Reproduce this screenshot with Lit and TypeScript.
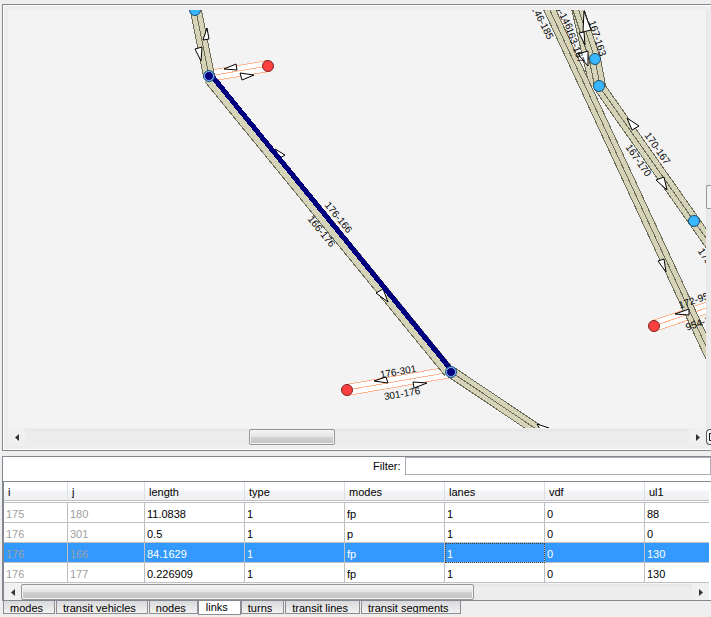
import { LitElement, html, svg, css } from "lit";
import { customElement, property, state } from "lit/decorators.js";
import { classMap } from "lit/directives/class-map.js";
import { styleMap } from "lit/directives/style-map.js";

type Pt = [number, number];

/* Map geometry, in map units (one unit is one pixel at the default zoom). */
const ROADS: { pts: Pt[]; plain?: boolean }[] = [
  { pts: [[193, 0], [196, 11], [209, 76]] },
  { pts: [[577, 8], [595, 86]] },
  { pts: [[578, 8], [595, 59], [600, 86]] },
  { pts: [[599, 86], [694, 221], [713, 248]] },
  { pts: [[548, 6], [711, 357]] },
  { pts: [[451, 372], [557, 443]] },
  { pts: [[209, 78], [449, 372]], plain: true },
];

const CONNECTORS: Pt[][] = [
  [[209, 76], [268, 66]],
  [[347, 390], [451, 372]],
  [[654, 326], [715, 305]],
];

const ARROWS = [
  "207,28 209,39 203,40",
  "195,49 202,47 201,61",
  "224,69 236,64 237,70",
  "240,73 254,75 242,80",
  "584,11 591,30 583,32",
  "579,33 584,32 585,45",
  "578,54 588,51 588,66",
  "627,118 639,126 632,130",
  "656,180 664,177 667,190",
  "658,261 664,259 666,272",
  "675,314 689,309 689,315",
  "275,149 285,155 280,158",
  "376,293 383,289 388,302",
  "374,381 386,377 388,383",
  "413,382 427,383 414,388",
  "537,424 549,428 541,431",
];

const LABELS: { text: string; x: number; y: number; a: number }[] = [
  { text: "176-166", x: 339, y: 217, a: 51 },
  { text: "166-176", x: 322, y: 231, a: 51 },
  { text: "176-301", x: 398, y: 371, a: -10 },
  { text: "301-176", x: 402, y: 393, a: -10 },
  { text: "167-170", x: 639, y: 160, a: 55 },
  { text: "170-167", x: 658, y: 148, a: 55 },
  { text: "167-163", x: 598, y: 38, a: 72 },
  { text: "163-167", x: 576, y: 45, a: 70 },
  { text: "185-146", x: 562, y: 12, a: 62 },
  { text: "146-185", x: 543, y: 22, a: 63 },
  { text: "172-954", x: 696, y: 299, a: -19 },
  { text: "954-172", x: 703, y: 321, a: -19 },
  { text: "175-167", x: 711, y: 264, a: 56 },
];

const NODES: Pt[] = [[195, 10], [209, 76], [451, 372], [595, 59], [599, 86], [694, 221]];
const ZONES: Pt[] = [[268, 66], [347, 390], [654, 326]];
const SELECTED: Pt[] = [[209, 76], [451, 372]];

const path = (pts: Pt[]) => pts.map((p) => p.join(",")).join(" ");

@customElement("network-map")
class NetworkMap extends LitElement {
  static styles = css`
    :host { display: block; min-width: 0; background: #f3f3f3; }
    svg { display: block; width: 100%; height: 418px; }
    polyline { fill: none; shape-rendering: crispEdges; }
    .casing { stroke: #6c6c58; stroke-width: 12; }
    .surface { stroke: #d5d3b8; stroke-width: 10; }
    .centre { stroke: #6c6c58; stroke-width: 1; }
    .c-casing { stroke: #ffb48e; stroke-width: 12; }
    .c-surface { stroke: #fff; stroke-width: 10; }
    .c-centre { stroke: #ffb48e; stroke-width: 1; }
    .arrow { fill: #fff; stroke: #000; stroke-width: 1; }
    .picked { stroke: #00007f; stroke-width: 5; }
    .node { fill: #38b6ff; stroke: #1c4f70; }
    .zone { fill: #ff4040; stroke: #7a2020; }
    .core { fill: #00007f; stroke: #8fa8e8; }
    text { font: 10px "Liberation Sans", Arial, sans-serif; text-anchor: middle; fill: #000; }
  `;

  render() {
    return html`
      <svg viewBox="8 10 698 418" preserveAspectRatio="xMinYMin slice" role="img" aria-label="Road network">
        ${CONNECTORS.map((p) => svg`
          <polyline class="c-casing" points=${path(p)}></polyline>
          <polyline class="c-surface" points=${path(p)}></polyline>
          <polyline class="c-centre" points=${path(p)}></polyline>`)}
        ${ROADS.map(({ pts, plain }) => svg`
          <polyline class="casing" points=${path(pts)}></polyline>
          <polyline class="surface" points=${path(pts)}></polyline>
          ${plain ? "" : svg`<polyline class="centre" points=${path(pts)}></polyline>`}`)}
        ${ARROWS.map((a) => svg`<polygon class="arrow" points=${a}></polygon>`)}
        <polyline class="picked" points="212,76 453,372"></polyline>
        ${LABELS.map((l) => svg`<text transform="translate(${l.x} ${l.y}) rotate(${l.a})" y="4">${l.text}</text>`)}
        ${NODES.map(([x, y]) => svg`<circle class="node" cx=${x} cy=${y} r="5.5"></circle>`)}
        ${ZONES.map(([x, y]) => svg`<circle class="zone" cx=${x} cy=${y} r="5.5"></circle>`)}
        ${SELECTED.map(([x, y]) => svg`<circle class="core" cx=${x} cy=${y} r="4.5"></circle>`)}
      </svg>`;
  }
}

@customElement("h-scrollbar")
class HScrollbar extends LitElement {
  @property({ type: Number }) start = 0;
  @property({ type: Number }) size = 50;

  static styles = css`
    :host { display: flex; height: 16px; background: linear-gradient(#e6e6e6, #ededed 30%, #ececec); }
    button { width: 17px; padding: 0; border: 0; background: #f0f0f0; display: flex; align-items: center; justify-content: center; }
    svg { display: block; fill: #333; }
    .track { flex: 1; min-width: 0; display: flex; }
    .thumb {
      box-sizing: border-box; height: 100%; border: 1px solid #979797; border-radius: 2px;
      background: linear-gradient(#f4f4f4, #e6e6e6 45%, #cfcfd1 55%, #c4c4c7); box-shadow: inset 0 0 0 1px #f2f2f2;
    }
  `;

  render() {
    return html`
      <button aria-label="Scroll left"><svg width="4" height="7" viewBox="0 0 4 7"><path d="M4 0v7L0 3.5z"/></svg></button>
      <div class="track">
        <div class="thumb" style=${styleMap({ marginLeft: `${this.start}%`, width: `${this.size}%` })}></div>
      </div>
      <button aria-label="Scroll right"><svg width="4" height="7" viewBox="0 0 4 7"><path d="M0 0v7l4-3.5z"/></svg></button>`;
  }
}

const COLUMNS = ["i", "j", "length", "type", "modes", "lanes", "vdf", "ul1"];
const ROWS = [
  ["175", "180", "11.0838", "1", "fp", "1", "0", "88"],
  ["176", "301", "0.5", "1", "p", "1", "0", "0"],
  ["176", "166", "84.1629", "1", "fp", "1", "0", "130"],
  ["176", "177", "0.226909", "1", "fp", "1", "0", "130"],
];
const TABS = ["modes", "transit vehicles", "nodes", "links", "turns", "transit lines", "transit segments"];

@customElement("app-root")
class AppRoot extends LitElement {
  @state() private tab = "links";
  @state() private row = 2;

  static styles = css`
    :host {
      display: flex; flex-direction: column; box-sizing: border-box; min-height: 100vh;
      padding: 4px 0 0 2px; gap: 5px; background: #eee; overflow: hidden;
      font: 11px/14px "Liberation Sans", Arial, sans-serif; color: #000;
    }
    .view { border: 1px solid #828790; border-right: 0; box-shadow: inset 1px 1px #fff, inset 0 -1px #fff; padding: 5px 0 5px 5px; }
    .view-grid { display: grid; grid-template-columns: minmax(0, 1fr) 5px; row-gap: 1px; }
    .v-track { background: linear-gradient(90deg, #e6e6e6, #ededed); }
    .v-thumb { box-sizing: border-box; margin-top: 175px; height: 24px; border: 1px solid #979797; border-right: 0; border-radius: 2px 0 0 2px; background: #f2f2f2; }
    .corner { padding: 0; border: 1px solid #555; border-right: 0; border-radius: 4px 0 0 4px; background: #f4f4f4; display: flex; align-items: center; justify-content: flex-end; }
    .corner svg { display: block; }

    .data { flex: 1; display: flex; flex-direction: column; border-top: 1px solid #828790; border-left: 1px solid #828790; background: #fff; }
    .filter { display: flex; justify-content: flex-end; gap: 4px; height: 24px; }
    .filter label { line-height: 18px; }
    .filter input {
      box-sizing: border-box; width: calc(43% + 2px); height: 18px; margin: 0; padding: 0 4px; border: 1px solid #abadb3;
      background: #fff; font: inherit; outline: 0;
    }
    .sheet { border: 1px solid #828790; border-width: 1px 0 1px 1px; }
    .grid { padding-right: 2px; }
    table { width: 100%; table-layout: fixed; border-collapse: separate; border-spacing: 0; }
    .c-i { width: 64px; }
    .c-j { width: 77px; }
    .c-val { width: 100px; }
    th, td { box-sizing: border-box; text-align: left; font-weight: normal; overflow: hidden; white-space: nowrap; }
    th {
      height: 21px; padding: 1px 4px 0; border-right: 1px solid #dcdfe3; border-bottom: 3px double #c0c0c0;
      background: linear-gradient(#fff 45%, #f3f4f6 50%, #eff1f4);
    }
    td { height: 20px; padding: 2px 2px 0; border-right: 1px solid #c0c0c0; border-bottom: 1px solid #c0c0c0; }
    th:last-child, td:last-child { border-right: 0; }
    .key { color: #a0a0a0; }
    .on td { background: #39f; color: #fff; }
    .on .key { color: #a0a0a0; }
    .on .cursor { outline: 1px dotted #444; outline-offset: -1px; }
    .bar { height: 17px; margin-right: 2px; border-top: 1px solid #f4f4f4; box-sizing: border-box; }

    .foot { background: #eee; margin-left: -1px; padding-left: 1px; display: flex; align-items: flex-start; flex: 1; }
    .tab {
      box-sizing: border-box; height: 13px; margin: 0 1px 0 0; padding: 0 11px 0 6px; overflow: hidden;
      border: 1px solid #8c8e94; border-top: 0; background: linear-gradient(#d9d9db, #f2f2f2);
      font: inherit; line-height: 14px; color: #000; white-space: nowrap;
    }
    .tab.open { height: 14px; margin: 0 0 0 -1px; padding: 0 12px 0 7px; background: #fff; line-height: 13px; }
  `;

  render() {
    return html`
      <section class="view">
        <div class="view-grid">
          <network-map></network-map>
          <div class="v-track"><div class="v-thumb"></div></div>
          <h-scrollbar .start=${33.7} .size=${13}></h-scrollbar>
          <button class="corner" aria-label="Reset view">
            <svg width="3" height="8" viewBox="0 0 3 8"><path d="M3 .5H1.5v7H3" fill="none" stroke="#111"/></svg>
          </button>
        </div>
      </section>
      <section class="data">
        <div class="filter">
          <label for="filter">Filter:</label>
          <input id="filter" type="text" />
        </div>
        <div class="sheet">
          <div class="grid">
            <table>
              <colgroup>
                <col class="c-i" /><col class="c-j" />
                <col class="c-val" /><col class="c-val" /><col class="c-val" /><col class="c-val" /><col class="c-val" />
                <col />
              </colgroup>
              <thead><tr>${COLUMNS.map((c) => html`<th scope="col">${c}</th>`)}</tr></thead>
              <tbody>
                ${ROWS.map((r, n) => html`
                  <tr class=${classMap({ on: n === this.row })} @click=${() => (this.row = n)}>
                    ${r.map((v, c) => html`<td class=${classMap({ key: c < 2, cursor: c === 5 })}>${v}</td>`)}
                  </tr>`)}
              </tbody>
            </table>
          </div>
          <div class="bar"><h-scrollbar .start=${0} .size=${67.5}></h-scrollbar></div>
        </div>
        <div class="foot" role="tablist">
          ${TABS.map((t) => html`
            <button role="tab" aria-selected=${t === this.tab} class=${classMap({ tab: true, open: t === this.tab })}
              @click=${() => (this.tab = t)}>${t}</button>`)}
        </div>
      </section>`;
  }
}
